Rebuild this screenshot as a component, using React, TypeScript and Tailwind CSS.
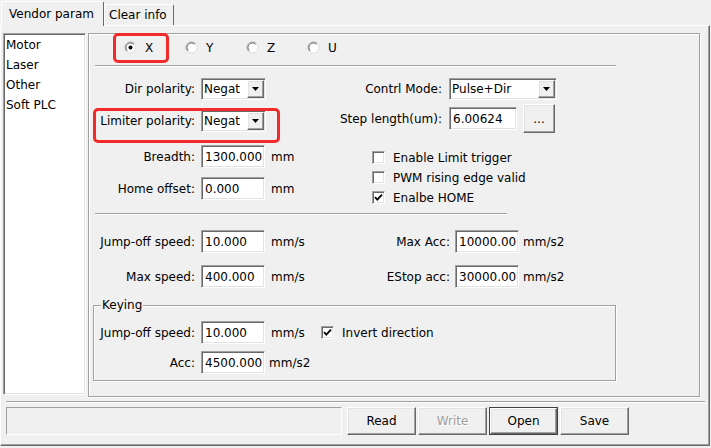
import React from 'react';

const sunken =
  'border border-t-[#a0a0a0] border-l-[#a0a0a0] border-r-white border-b-white shadow-[inset_1px_1px_0_#696969,inset_-1px_-1px_0_#e3e3e3]';
const raised =
  'border border-t-white border-l-white border-r-[#696969] border-b-[#696969] shadow-[inset_-1px_-1px_0_#a0a0a0,inset_1px_1px_0_#e3e3e3]';
const etchedLine = 'h-[2px] border-t border-t-[#a0a0a0] border-b border-b-white';

const Arrow = () => (
  <svg width="7" height="4" viewBox="0 0 7 4">
    <polygon points="0,0 7,0 3.5,4" fill="#000" />
  </svg>
);

const Combo = ({ value, w }: { value: string; w: string }) => (
  <div className={`${sunken} ${w} h-[22px] bg-white flex`}>
    <span className="flex-1 pl-[2px] leading-[20px] overflow-hidden whitespace-nowrap">{value}</span>
    <div className={`${raised} w-[17px] h-[18px] mt-[1px] mr-[1px] bg-[#f0f0f0] flex items-center justify-center`}>
      <Arrow />
    </div>
  </div>
);

const Field = ({ value, w = 'w-[64px]' }: { value: string; w?: string }) => (
  <input
    readOnly
    value={value}
    className={`${sunken} ${w} h-[23px] bg-white pl-[3px] outline-none`}
  />
);

const Radio = ({ checked }: { checked?: boolean }) => (
  <svg width="13" height="13" viewBox="0 0 13 13">
    <circle cx="6.5" cy="6.5" r="5.5" fill="#fff" />
    <path d="M2.6 10.4 A5.5 5.5 0 0 1 10.4 2.6" stroke="#a0a0a0" fill="none" />
    <path d="M10.4 2.6 A5.5 5.5 0 0 1 2.6 10.4" stroke="#dcdcdc" fill="none" />
    <path d="M3.3 9.7 A4.5 4.5 0 0 1 9.7 3.3" stroke="#696969" fill="none" />
    {checked && <circle cx="6.5" cy="6.5" r="2" fill="#000" />}
  </svg>
);

const Check = ({ checked }: { checked?: boolean }) => (
  <div className={`${sunken} w-[13px] h-[13px] bg-white shrink-0`}>
    {checked && (
      <svg width="11" height="11" viewBox="0 0 11 11">
        <path d="M2 5.2 L4.3 7.6 L9 2.6" stroke="#000" strokeWidth="1.8" fill="none" />
      </svg>
    )}
  </div>
);

const Label = ({ text, w }: { text: string; w: string }) => (
  <span className={`${w} text-right whitespace-nowrap`}>{text}</span>
);

const Button = ({ text, disabled, dflt }: { text: string; disabled?: boolean; dflt?: boolean }) => {
  const inner = (
    <div className={`${raised} w-full h-full flex items-center justify-center bg-[#f0f0f0]`}>
      <span className={disabled ? 'text-[#a0a0a0] [text-shadow:1px_1px_0_#fff]' : ''}>{text}</span>
    </div>
  );
  return dflt ? (
    <div className="w-[69px] h-[28px] border border-[#404040]">{inner}</div>
  ) : (
    <div className="w-[69px] h-[28px]">{inner}</div>
  );
};

export default function App() {
  const axes = ['X', 'Y', 'Z', 'U'];
  return (
    <div className="relative w-[711px] h-[448px] bg-[#f0f0f0] overflow-hidden font-['DejaVu_Sans',sans-serif] text-[12px] text-black">
      {/* tab strip */}
      <div className="flex items-end h-[25px]">
        <div className="relative z-10 ml-[1px] w-[103px] h-[25px] -mb-[1px] bg-[#f0f0f0] border-l border-t border-white border-r border-r-[#696969] rounded-t-[2px] pl-[7px] flex items-center">
          Vendor param
        </div>
        <div className="w-[70px] h-[21px] border-l border-t border-white border-r border-r-[#696969] rounded-t-[2px] pl-[4px] flex items-center">
          Clear info
        </div>
      </div>

      {/* tab page */}
      <div className="w-[710px] h-[421px] border border-t-white border-l-white border-r-[#696969] border-b-[#696969] shadow-[inset_-1px_-1px_0_#a0a0a0] flex flex-col">
        <div className="flex items-start ml-[2px] mt-[7px]">
          {/* left list */}
          <div className={`${sunken} w-[83px] h-[362px] bg-white pt-[1px] pl-[2px] leading-[20px]`}>
            <div>Motor</div>
            <div>Laser</div>
            <div>Other</div>
            <div>Soft PLC</div>
          </div>

          {/* main frame */}
          <div className="ml-[2px] w-[612px] h-[364px] border border-[#a0a0a0] shadow-[1px_1px_0_#fff,inset_1px_1px_0_#fff] flex flex-col">
            <div className="h-[27px] flex items-center pl-[35px]">
              {axes.map((a, i) => (
                <div key={a} className="w-[61px] flex items-center gap-[8px]">
                  <Radio checked={i === 0} />
                  <span>{a}</span>
                </div>
              ))}
            </div>
            <div className={`${etchedLine} mt-[4px] ml-[6px] w-[521px]`} />

            {/* section A */}
            <div className="h-[146px] flex">
              <div className="w-[241px] flex flex-col">
                <div className="mt-[11px] h-[22px] flex items-center">
                  <Label text="Dir polarity:" w="w-[106px]" />
                  <div className="ml-[6px]"><Combo value="Negat" w="w-[65px]" /></div>
                </div>
                <div className="mt-[10px] h-[22px] flex items-center">
                  <Label text="Limiter polarity:" w="w-[106px]" />
                  <div className="ml-[6px]"><Combo value="Negat" w="w-[65px]" /></div>
                </div>
                <div className="mt-[13px] h-[23px] flex items-center">
                  <Label text="Breadth:" w="w-[106px]" />
                  <div className="ml-[6px]"><Field value="1300.000" /></div>
                  <span className="ml-[6px]">mm</span>
                </div>
                <div className="mt-[9px] h-[23px] flex items-center">
                  <Label text="Home offset:" w="w-[106px]" />
                  <div className="ml-[6px]"><Field value="0.000" /></div>
                  <span className="ml-[6px]">mm</span>
                </div>
              </div>
              <div className="flex flex-col">
                <div className="mt-[11px] h-[22px] flex items-center">
                  <Label text="Contrl Mode:" w="w-[112px]" />
                  <div className="ml-[7px]"><Combo value="Pulse+Dir" w="w-[108px]" /></div>
                </div>
                <div className="mt-[4px] h-[29px] flex items-center">
                  <Label text="Step length(um):" w="w-[112px]" />
                  <div className="ml-[7px]"><Field value="6.00624" w="w-[68px]" /></div>
                  <div className={`${raised} ml-[6px] w-[32px] h-[29px] flex items-center justify-center`}>...</div>
                </div>
                <div className="mt-[18px] ml-[42px] flex flex-col gap-[7px]">
                  <div className="h-[13px] flex items-center gap-[8px]">
                    <Check />
                    <span>Enable Limit trigger</span>
                  </div>
                  <div className="h-[13px] flex items-center gap-[8px]">
                    <Check />
                    <span>PWM rising edge valid</span>
                  </div>
                  <div className="h-[13px] flex items-center gap-[8px]">
                    <Check checked />
                    <span>Enalbe HOME</span>
                  </div>
                </div>
              </div>
            </div>
            <div className={`${etchedLine} ml-[6px] w-[412px]`} />

            {/* section B */}
            <div className="mt-[15px] h-[23px] flex items-center">
              <div className="w-[241px] flex items-center">
                <Label text="Jump-off speed:" w="w-[106px]" />
                <div className="ml-[6px]"><Field value="10.000" /></div>
                <span className="ml-[6px]">mm/s</span>
              </div>
              <Label text="Max Acc:" w="w-[120px]" />
              <div className="ml-[5px]"><Field value="10000.00" /></div>
              <span className="ml-[4px]">mm/s2</span>
            </div>
            <div className="mt-[12px] h-[23px] flex items-center">
              <div className="w-[241px] flex items-center">
                <Label text="Max speed:" w="w-[106px]" />
                <div className="ml-[6px]"><Field value="400.000" /></div>
                <span className="ml-[6px]">mm/s</span>
              </div>
              <Label text="EStop acc:" w="w-[120px]" />
              <div className="ml-[5px]"><Field value="30000.00" /></div>
              <span className="ml-[4px]">mm/s2</span>
            </div>

            {/* keying group */}
            <div className="relative mt-[17px] ml-[4px] w-[523px] h-[76px] border border-[#a0a0a0] shadow-[1px_1px_0_#fff,inset_1px_1px_0_#fff] flex flex-col">
              <span className="absolute -top-[8px] left-[7px] px-[1px] bg-[#f0f0f0] leading-[14px]">Keying</span>
              <div className="mt-[15px] h-[23px] flex items-center">
                <Label text="Jump-off speed:" w="w-[101px]" />
                <div className="ml-[6px]"><Field value="10.000" /></div>
                <span className="ml-[6px] w-[50px]">mm/s</span>
                <Check checked />
                <span className="ml-[8px]">Invert direction</span>
              </div>
              <div className="mt-[7px] h-[23px] flex items-center">
                <Label text="Acc:" w="w-[101px]" />
                <div className="ml-[6px]"><Field value="4500.000" /></div>
                <span className="ml-[4px]">mm/s2</span>
              </div>
            </div>
          </div>
        </div>

        <div className={`${etchedLine} mt-[4px] ml-[5px] w-[699px]`} />

        <div className="mt-[4px] ml-[5px] flex items-center">
          <div className="w-[336px] h-[28px] border border-t-[#a0a0a0] border-l-[#a0a0a0] border-r-white border-b-white" />
          <div className="ml-[5px] flex gap-[2px]">
            <Button text="Read" />
            <Button text="Write" disabled />
            <Button text="Open" dflt />
            <Button text="Save" />
          </div>
        </div>
      </div>

      {/* red annotation boxes */}
      <div className="absolute left-[113px] top-[33px] w-[56px] h-[30px] border-[3px] border-[#f22a2a] rounded-[5px]" />
      <div className="absolute left-[93px] top-[108px] w-[187px] h-[35px] border-[3px] border-[#f22a2a] rounded-[5px]" />
    </div>
  );
}
